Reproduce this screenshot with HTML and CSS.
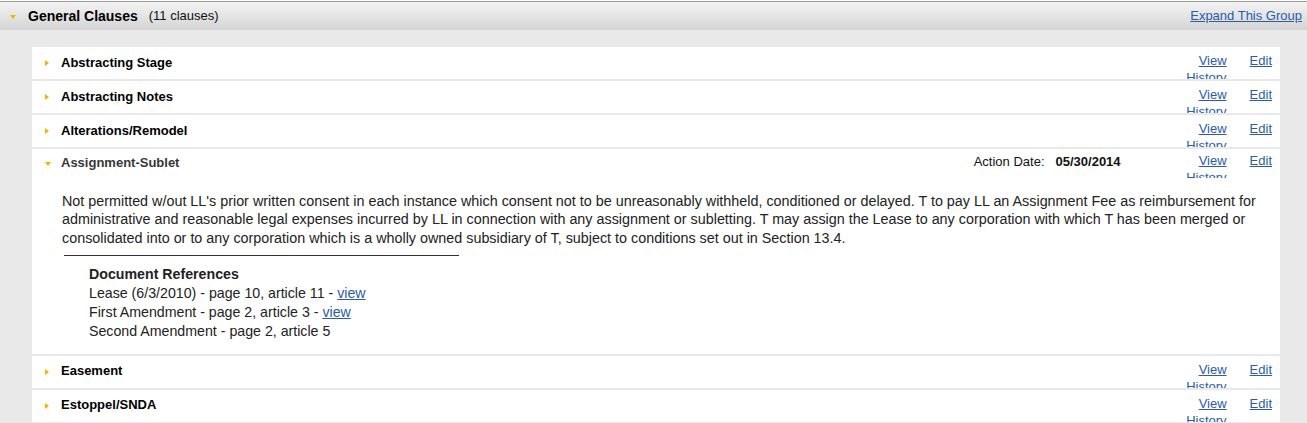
FILE: index.html
```html
<!DOCTYPE html>
<html>
<head>
<meta charset="utf-8">
<title>General Clauses</title>
<link rel="stylesheet" href="styles.css">
</head>
<body>
<div class="group">
  <div class="group-header">
    <span class="caret-down group-caret"></span>
    <span class="group-title">General Clauses</span>
    <span class="group-count">(11 clauses)</span>
    <a class="expand" href="#">Expand This Group</a>
  </div>
  <div class="clauses">
    <div class="clause">
      <div class="clause-head">
        <span class="caret-right"></span>
        <span class="clause-title">Abstracting Stage</span>
        <div class="actions"><a class="history" href="#">View History</a><a class="edit" href="#">Edit</a></div>
      </div>
    </div>
    <div class="clause">
      <div class="clause-head">
        <span class="caret-right"></span>
        <span class="clause-title">Abstracting Notes</span>
        <div class="actions"><a class="history" href="#">View History</a><a class="edit" href="#">Edit</a></div>
      </div>
    </div>
    <div class="clause">
      <div class="clause-head">
        <span class="caret-right"></span>
        <span class="clause-title">Alterations/Remodel</span>
        <div class="actions"><a class="history" href="#">View History</a><a class="edit" href="#">Edit</a></div>
      </div>
    </div>
    <div class="clause open">
      <div class="clause-head">
        <span class="caret-down"></span>
        <span class="clause-title">Assignment-Sublet</span>
        <div class="action-date"><span class="label">Action Date:</span><span class="date">05/30/2014</span></div>
        <div class="actions"><a class="history" href="#">View History</a><a class="edit" href="#">Edit</a></div>
      </div>
      <div class="clause-body">
        <p class="desc">Not permitted w/out LL's prior written consent in each instance which consent not to be unreasonably withheld, conditioned or delayed. T to pay LL an Assignment Fee as reimbursement for administrative and reasonable legal expenses incurred by LL in connection with any assignment or subletting. T may assign the Lease to any corporation with which T has been merged or consolidated into or to any corporation which is a wholly owned subsidiary of T, subject to conditions set out in Section 13.4.</p>
        <div class="rule"></div>
        <div class="refs">
          <div class="refs-title">Document References</div>
          <div class="ref">Lease (6/3/2010) - page 10, article 11 - <a href="#">view</a></div>
          <div class="ref">First Amendment - page 2, article 3 - <a href="#">view</a></div>
          <div class="ref">Second Amendment - page 2, article 5</div>
        </div>
      </div>
    </div>
    <div class="clause">
      <div class="clause-head">
        <span class="caret-right"></span>
        <span class="clause-title">Easement</span>
        <div class="actions"><a class="history" href="#">View History</a><a class="edit" href="#">Edit</a></div>
      </div>
    </div>
    <div class="clause">
      <div class="clause-head">
        <span class="caret-right"></span>
        <span class="clause-title">Estoppel/SNDA</span>
        <div class="actions"><a class="history" href="#">View History</a><a class="edit" href="#">Edit</a></div>
      </div>
    </div>
  </div>
</div>
</body>
</html>
```

FILE: styles.css
```css
html, body {
  margin: 0;
  padding: 0;
  background: #e9e9e9;
  font-family: "Liberation Sans", Arial, Helvetica, sans-serif;
  color: #000;
  overflow: hidden;
}

a {
  color: #2a5caa;
  text-decoration: underline;
}

.group {
  padding-top: 1px;
  background: #fdfdfd;
}

.group-header {
  display: flex;
  align-items: center;
  height: 28px;
  border-top: 1px solid #9d9d9d;
  background: linear-gradient(to bottom, #f2f2f2 0%, #e4e4e4 50%, #d3d3d3 100%);
  padding: 0 5px 0 10px;
}

.caret-down {
  width: 0;
  height: 0;
  border-left: 3.5px solid transparent;
  border-right: 3.5px solid transparent;
  border-top: 4px solid #f3b300;
  flex: none;
}

.group-caret {
  margin-top: 2px;
  margin-right: 12px;
}

.group-title {
  font-size: 14px;
  font-weight: bold;
  line-height: 16px;
}

.group-count {
  font-size: 13px;
  margin-left: 11px;
  line-height: 16px;
  color: #111;
}

.expand {
  margin-left: auto;
  font-size: 13px;
  line-height: 16px;
}

.clauses {
  background: #e9e9e9;
  padding: 17px 27px 0 32px;
}

.clause {
  background: #fff;
  margin-bottom: 2px;
}

.clause-head {
  display: flex;
  align-items: flex-start;
  height: 32px;
  overflow: hidden;
  padding: 0 8px 0 13px;
}

.caret-right {
  width: 0;
  height: 0;
  border-top: 3.5px solid transparent;
  border-bottom: 3.5px solid transparent;
  border-left: 4px solid #f3b300;
  margin-top: 13px;
  margin-right: 12px;
  flex: none;
}

.clause-title {
  font-size: 13px;
  font-weight: bold;
  line-height: 18px;
  padding-top: 6.5px;
  color: #000;
}

.actions {
  margin-left: auto;
  display: flex;
  align-items: flex-start;
  padding-top: 5px;
  font-size: 13px;
  line-height: 17px;
}

.history {
  width: 44px;
  text-align: right;
}

.edit {
  margin-left: 23px;
}

.open .clause-head {
  height: 29px;
}

.open .caret-down {
  margin-top: 13px;
  margin-right: 10px;
}

.open .clause-title {
  padding-top: 5px;
  color: #383838;
}

.open .actions {
  padding-top: 3px;
}

.action-date {
  margin-left: auto;
  margin-right: 62px;
  padding-top: 4px;
  font-size: 13px;
  line-height: 17px;
  display: flex;
  gap: 11px;
  color: #111;
}

.action-date .date {
  font-weight: bold;
}

.open .action-date + .actions {
  margin-left: 0;
}

.clause-body {
  padding: 13.5px 15px 13px 30px;
  color: #222;
  font-size: 14px;
}

.desc {
  margin: 0;
  font-size: 14.35px;
  line-height: 18.5px;
}

.rule {
  width: 395px;
  margin: 7.5px 0 9px 2px;
  border-top: 1px solid #333;
}

.refs {
  padding-left: 27px;
  font-size: 14.2px;
  line-height: 19px;
}

.refs-title {
  font-weight: bold;
}
```
